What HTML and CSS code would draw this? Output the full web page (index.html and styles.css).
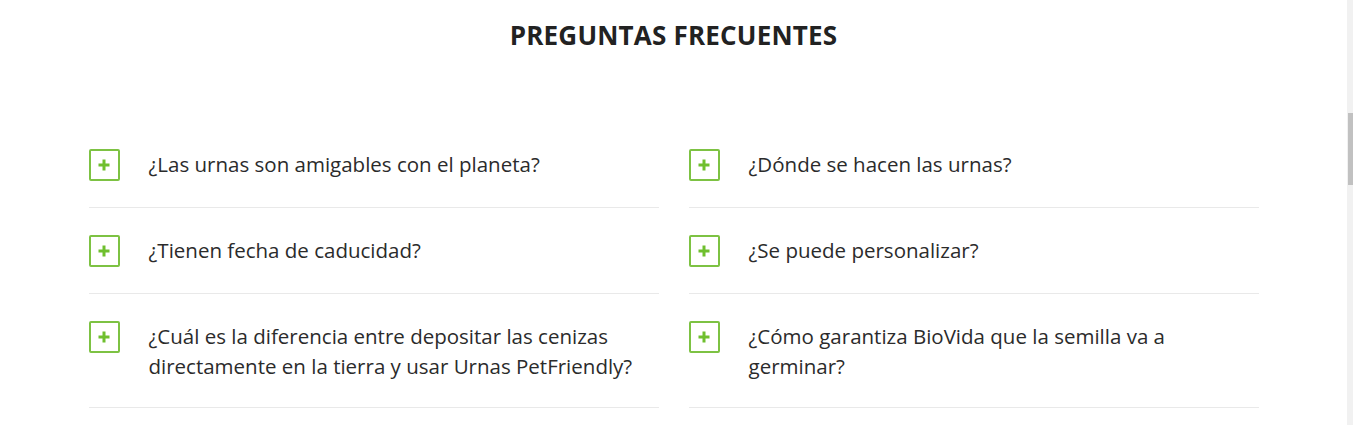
FILE: index.html
```html
<!DOCTYPE html>
<html lang="es">
<head>
<meta charset="utf-8">
<title>Preguntas frecuentes</title>
<link rel="stylesheet" href="styles.css">
</head>
<body>
<div class="page">
  <main class="content">
    <section class="faq">
      <h2 class="faq-title">PREGUNTAS FRECUENTES</h2>
      <div class="faq-grid">
        <div class="faq-item">
          <span class="faq-icon"></span>
          <p class="faq-q">¿Las urnas son amigables con el planeta?</p>
        </div>
        <div class="faq-item">
          <span class="faq-icon"></span>
          <p class="faq-q">¿Dónde se hacen las urnas?</p>
        </div>
        <div class="faq-item">
          <span class="faq-icon"></span>
          <p class="faq-q">¿Tienen fecha de caducidad?</p>
        </div>
        <div class="faq-item">
          <span class="faq-icon"></span>
          <p class="faq-q">¿Se puede personalizar?</p>
        </div>
        <div class="faq-item">
          <span class="faq-icon"></span>
          <p class="faq-q">¿Cuál es la diferencia entre depositar las cenizas directamente en la tierra y usar Urnas PetFriendly?</p>
        </div>
        <div class="faq-item">
          <span class="faq-icon"></span>
          <p class="faq-q">¿Cómo garantiza BioVida que la semilla va a germinar?</p>
        </div>
      </div>
    </section>
  </main>
  <aside class="scrollbar"><div class="scrollbar-thumb"></div></aside>
</div>
</body>
</html>
```

FILE: styles.css
```css
* { box-sizing: border-box; }
html, body { margin: 0; padding: 0; background: #fff; }
body {
  font-family: "Open Sans", "Liberation Sans", sans-serif;
  color: #2f2f2f;
  overflow: hidden;
}
.page {
  display: flex;
  height: 425px;
}
.content {
  flex: 1;
  min-width: 0;
}
.faq {
  width: 1170px;
  margin: 0 auto;
  padding-top: 16px;
}
.faq-title {
  margin: 0;
  text-align: center;
  font-size: 26px;
  line-height: 38px;
  font-weight: 700;
  color: #222;
  letter-spacing: 0.2px;
}
.faq-grid {
  display: grid;
  grid-template-columns: 570px 570px;
  column-gap: 30px;
  margin-top: 68px;
}
.faq-item {
  display: flex;
  align-items: flex-start;
  gap: 29px;
  padding: 27px 0 26px;
  border-bottom: 1px solid #e9e9e9;
}
.faq-icon {
  flex: none;
  position: relative;
  width: 31px;
  height: 32px;
  border: 2px solid #7dc243;
  border-radius: 2px;
}
.faq-icon::before,
.faq-icon::after {
  content: "";
  position: absolute;
  background: #6fbf2e;
  left: 50%;
  top: 50%;
  transform: translate(-50%, -50%);
}
.faq-icon::before { width: 11px; height: 3px; }
.faq-icon::after { width: 3px; height: 11px; }
.faq-q {
  margin: 0;
  font-size: 20.5px;
  line-height: 30px;
  font-weight: 500;
  color: #2b2b2b;
}
.scrollbar {
  flex: none;
  width: 6px;
  background: #f1f1f1;
  padding: 113px 0 0 1px;
}
.scrollbar-thumb {
  height: 72px;
  background: #c1c1c1;
}
```
